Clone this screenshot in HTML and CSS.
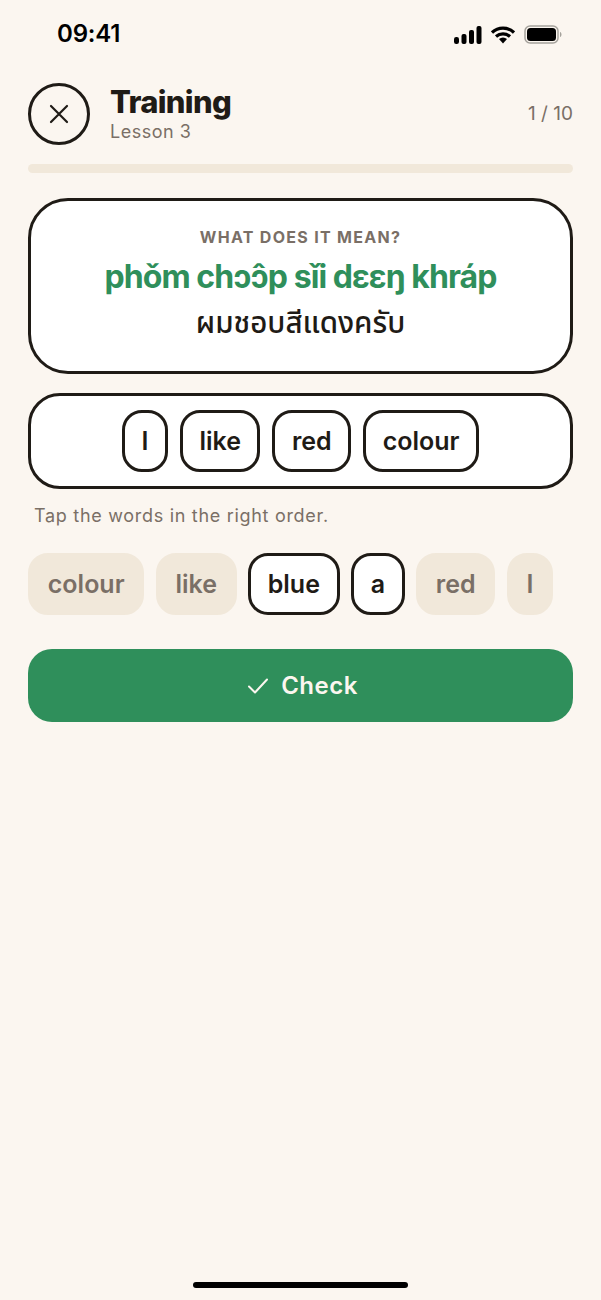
FILE: index.html
```html
<!DOCTYPE html>
<html lang="en">

<head>
  <meta charset="UTF-8">
  <title>Training</title>
  <link rel="stylesheet" href="styles.css">
</head>

<body>
  <div class="status-bar">
    <span class="time">09:41</span>
    <div class="status-icons">
      <svg width="28" height="18" viewBox="0 0 28 18">
        <rect x="0" y="11" width="5" height="7" rx="2.2" fill="#000" />
        <rect x="7.500" y="8" width="5" height="10" rx="2" fill="#000" />
        <rect x="15" y="4" width="5" height="14" rx="2" fill="#000" />
        <rect x="22.500" y="0" width="5" height="18" rx="2" fill="#000" />
      </svg>
      <svg width="24" height="18" viewBox="0 0 24 18">
        <path d="M1 6.500 A16 16 0 0 1 23 6.500" fill="none" stroke="#000" stroke-width="3.200" />
        <path d="M5 10.500 A10.500 10.500 0 0 1 19 10.500" fill="none" stroke="#000" stroke-width="3.200" />
        <path d="M8 13 A6 6 0 0 1 16 13 L12 17.500 Z" fill="#000" />
      </svg>
      <svg width="39" height="19" viewBox="0 0 39 19">
        <rect x="1" y="1" width="33" height="17" rx="5" fill="none" stroke="#a5a29c" stroke-width="1.500" />
        <rect x="3" y="3" width="29" height="13" rx="3.500" fill="#000" />
        <path d="M36 7 C38 7.500 38 11.500 36 12 Z" fill="#a5a29c" />
      </svg>
    </div>
  </div>

  <main class="screen">
    <header class="header">
      <button class="close-btn">
        <svg width="20" height="20" viewBox="0 0 20 20">
          <path d="M2 2 L18 18 M18 2 L2 18" stroke="#1f1b16" stroke-width="2.200" stroke-linecap="round" />
        </svg>
      </button>
      <div class="header-text">
        <h1>Training</h1>
        <div class="lesson">Lesson 3</div>
      </div>
      <div class="count">1 / 10</div>
    </header>

    <div class="progress"></div>

    <section class="card">
      <div class="eyebrow">WHAT DOES IT MEAN?</div>
      <div class="phonetic">phǒm chɔ̂ɔp sǐi dɛɛŋ khráp</div>
      <div class="thai">ผมชอบสีแดงครับ</div>
    </section>

    <section class="answer">
      <span class="chip">I</span>
      <span class="chip">like</span>
      <span class="chip">red</span>
      <span class="chip">colour</span>
    </section>

    <p class="hint">Tap the words in the right order.</p>

    <div class="bank">
      <span class="chip used">colour</span>
      <span class="chip used">like</span>
      <span class="chip">blue</span>
      <span class="chip">a</span>
      <span class="chip used">red</span>
      <span class="chip used">I</span>
    </div>

    <button class="check-btn">
      <svg width="22" height="18" viewBox="0 0 22 18">
        <path d="M2 9.500 L8 15.500 L20 2.500" fill="none" stroke="#fbf6ef" stroke-width="2" stroke-linecap="round" stroke-linejoin="round" />
      </svg>
      Check
    </button>
  </main>

  <div class="home-bar"></div>
</body>

</html>
```

FILE: styles.css
```css
* {
  box-sizing: border-box;
}

body {
  margin: 0;
  height: 1300px;
  background: #fbf6f0;
  color: #1f1b16;
  font-family: Inter, "Noto Sans", sans-serif;
  display: flex;
  flex-direction: column;
  overflow: hidden;
}

.status-bar {
  height: 83px;
  padding: 19px 38px 0 57px;
  display: flex;
  justify-content: space-between;
  align-items: flex-start;
}

.time {
  font-size: 24px;
  line-height: 30px;
  font-weight: 600;
  letter-spacing: -0.2px;
  color: #000;
}

.status-icons {
  display: flex;
  align-items: center;
  gap: 9px;
  padding-top: 6px;
}

.screen {
  flex: 1;
  padding: 0 28px;
}

.header {
  display: flex;
  align-items: center;
  height: 62px;
}

.close-btn {
  width: 62px;
  height: 62px;
  border: 3px solid #1f1b16;
  border-radius: 50%;
  background: none;
  padding: 0;
  display: flex;
  align-items: center;
  justify-content: center;
}

.header-text {
  flex: 1;
  margin-left: 20px;
  margin-top: -2px;
}

h1 {
  margin: 0;
  font-size: 31px;
  line-height: 36px;
  font-weight: 800;
  letter-spacing: -0.7px;
}

.lesson {
  margin-top: 1px;
  font-size: 18px;
  line-height: 22px;
  color: #7a6f66;
  letter-spacing: 0.5px;
}

.count {
  font-size: 19px;
  margin-bottom: 1px;
  color: #7a6f66;
}

.progress {
  height: 9px;
  margin-top: 19px;
  border-radius: 5px;
  background: #f1e8da;
}

.card {
  margin-top: 25px;
  height: 176px;
  padding-top: 26px;
  background: #fff;
  border: 3px solid #1f1b16;
  border-radius: 40px;
  text-align: center;
}

.eyebrow {
  font-size: 16px;
  line-height: 20px;
  font-weight: 700;
  letter-spacing: 1.300px;
  color: #7a6f66;
}

.phonetic {
  margin-top: 10px;
  font-size: 32px;
  line-height: 40px;
  font-weight: 700;
  letter-spacing: -0.95px;
  color: #2f8f5b;
}

.thai {
  margin-top: 9px;
  font-size: 29.500px;
  line-height: 36px;
  font-weight: 500;
  font-family: "Noto Sans Thai", Inter, "Noto Sans", sans-serif;
}

.answer {
  margin-top: 19px;
  height: 96px;
  background: #fff;
  border: 3px solid #1f1b16;
  border-radius: 32px;
  display: flex;
  align-items: center;
  justify-content: center;
  gap: 12px;
}

.chip {
  height: 62px;
  padding: 0 16.500px;
  display: flex;
  align-items: center;
  background: #fff;
  border: 3px solid #1f1b16;
  border-radius: 20px;
  font-size: 25px;
  font-weight: 600;
}

.hint {
  margin: 16px 0 0 6px;
  font-size: 18px;
  line-height: 22px;
  letter-spacing: 0.7px;
  color: #7a6f66;
}

.bank {
  margin-top: 26px;
  display: flex;
  gap: 11.200px;
}

.bank .chip {
  padding: 0 16.800px;
}

.chip.used {
  background: #f1e8da;
  border-color: #f1e8da;
  color: #7a6f66;
}

.check-btn {
  margin-top: 34px;
  width: 100%;
  height: 73px;
  padding: 0 0 0 4px;
  border: none;
  border-radius: 24px;
  background: #2f8f5b;
  color: #fbf6ef;
  font-family: inherit;
  font-size: 24px;
  font-weight: 600;
  letter-spacing: 0.5px;
  display: flex;
  align-items: center;
  justify-content: center;
  gap: 12px;
}

.home-bar {
  width: 215px;
  height: 6px;
  margin: 0 auto 12px;
  border-radius: 3px;
  background: #000;
}
```
